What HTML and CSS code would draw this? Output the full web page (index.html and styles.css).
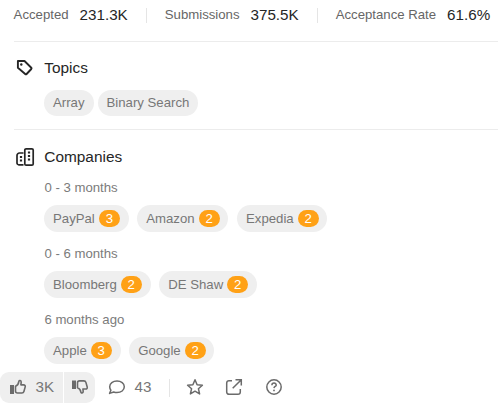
FILE: index.html
```html
<!DOCTYPE html>
<html lang="en">
<head>
<meta charset="utf-8">
<title>Problem details</title>
<link rel="stylesheet" href="styles.css">
</head>
<body>
<main class="panel">
  <dl class="stats">
    <div class="stat"><dt>Accepted</dt><dd>231.3K</dd></div>
    <div class="stat"><dt>Submissions</dt><dd>375.5K</dd></div>
    <div class="stat"><dt>Acceptance Rate</dt><dd>61.6%</dd></div>
  </dl>
  <section class="section topics">
    <h2><svg width="20" height="20" viewBox="0 0 20 20" fill="none" stroke="currentColor" stroke-width="1.9" stroke-linejoin="round"><path d="M2.900 3H9.500L16.300 9.700a1 1 0 0 1 0 1.300l-4.700 5a1 1 0 0 1-1.400 0L2.900 9.800z"/><circle cx="6.300" cy="6.500" r="1.200" fill="currentColor" stroke="none"/></svg>Topics</h2>
    <div class="tags"><span class="tag">Array</span><span class="tag">Binary Search</span></div>
  </section>
  <section class="section companies">
    <h2><svg width="20" height="20" viewBox="0 0 20 20" fill="none" stroke="currentColor" stroke-width="1.7"><rect x="9.800" y="1.800" width="8.400" height="16.400" rx="1.300"/><path d="M8.500 6H4.500a2.500 2.500 0 0 0-2.500 2.500V16a1.800 1.800 0 0 0 1.800 1.800h4.700"/><path d="M14 4.500v2M14 8v2M14 11.500v2M6 9v2M6 12.500v2" stroke-width="2.200"/></svg>Companies</h2>
    <h3>0 - 3 months</h3>
    <div class="chips"><span class="chip">PayPal<b>3</b></span><span class="chip">Amazon<b>2</b></span><span class="chip">Expedia<b>2</b></span></div>
    <h3>0 - 6 months</h3>
    <div class="chips"><span class="chip">Bloomberg<b>2</b></span><span class="chip">DE Shaw<b>2</b></span></div>
    <h3>6 months ago</h3>
    <div class="chips"><span class="chip">Apple<b>3</b></span><span class="chip">Google<b>2</b></span></div>
  </section>
</main>
<footer class="toolbar">
  <div class="votes">
    <button class="up" aria-label="Like"><svg width="18" height="18" viewBox="0 0 18 18" fill="none" stroke="currentColor" stroke-width="1.600" stroke-linejoin="round"><path d="M1 7h4v9H1z" fill="currentColor" stroke="none"/><path d="M6.500 8.200c2-.6 3-2.200 3.300-4.500.2-1.800 2.500-1.400 2.400.5l-.3 2.700h2.700c1.300 0 1.900.9 1.600 2l-1.300 4.600c-.3 1-.9 1.500-2 1.500H8.500c-1.200 0-2-.8-2-2z"/></svg><span>3K</span></button>
    <button class="down" aria-label="Dislike"><svg width="18" height="18" viewBox="0 0 18 18" fill="none" stroke="currentColor" stroke-width="1.600" stroke-linejoin="round"><path d="M1 2.500h4v8.500H1z" fill="currentColor" stroke="none"/><path d="M6.500 9.700c2 .6 3 2.200 3.300 4.100.2 1.800 2.500 1.400 2.400-.5l-.3-2.300h2.700c1.300 0 1.900-.9 1.600-2l-1.300-4.600c-.3-1-.9-1.500-2-1.500H8.500c-1.200 0-2 .8-2 2z"/></svg></button>
  </div>
  <button class="comments" aria-label="Comments"><svg width="18" height="18" viewBox="0 0 18 18" fill="none" stroke="currentColor" stroke-width="1.500" stroke-linejoin="round"><path d="M2.900 12.200A5.600 5.600 0 0 1 1.700 8.700C1.700 5.300 4.900 3 9 3s7.300 2.400 7.300 5.800-3.200 5.800-7.300 5.800c-1.200 0-2.300-.2-3.300-.6L1.600 15.400z"/></svg><span>43</span></button>
  <i class="rule"></i>
  <div class="actions">
    <svg width="18" height="18" viewBox="0 0 18 18" fill="none" stroke="currentColor" stroke-width="1.500" stroke-linejoin="round"><path d="M9 1.800l2.100 4.900 5.300.5-4 3.500 1.200 5.200L9 13.200l-4.600 2.700 1.200-5.200-4-3.500 5.300-.5z"/></svg>
    <svg width="18" height="18" viewBox="0 0 18 18" fill="none" stroke="currentColor" stroke-width="1.500"><path d="M7 2.800H4A2.300 2.300 0 0 0 1.700 5v9A2.300 2.300 0 0 0 4 16.300h9a2.300 2.300 0 0 0 2.300-2.300v-3M10.500 1.700h5.800v5.800M16.300 1.700L7.700 10.300"/></svg>
    <svg width="18" height="18" viewBox="0 0 18 18" fill="none" stroke="currentColor" stroke-width="1.500"><circle cx="9" cy="9" r="7.200"/><path d="M6.900 7.200c.1-2.900 4.400-2.700 4.300 0 0 1.300-2.100 1.300-2.200 2.900"/><circle cx="9" cy="12.400" r=".9" fill="currentColor" stroke="none"/></svg>
  </div>
</footer>
</body>
</html>
```
FILE: styles.css
```css
* { box-sizing: border-box; }
body {
  margin: 0;
  height: 404px;
  overflow: hidden;
  background: #fff;
  color: #262626;
  font-family: "Liberation Sans", Arial, sans-serif;
  font-size: 13.2px;
}
svg { display: block; flex: none; }
.panel { height: 372px; padding-left: 14px; }
.stats {
  display: flex;
  margin: 0 0 0 -0.4px;
  height: 41px;
  padding-top: 8px;
  white-space: nowrap;
}
.stat { display: flex; align-items: center; height: 15px; line-height: 17px; }
.stat + .stat { margin-left: 18px; padding-left: 18px; border-left: 1px solid #e5e5e5; }
dt, dd { margin-top: -2px; }
dt { color: #666; }
dd { margin-left: 11px; font-size: 15.2px; }
.section { border-top: 1px solid #ececec; }
.topics { height: 88px; padding-top: 16px; }
.companies { padding-top: 17px; }
h2 {
  display: flex;
  align-items: center;
  gap: 9.3px;
  margin: 0 0 0 1px;
  height: 20px;
  font-size: 15.4px;
  line-height: 18px;
  padding-bottom: 1px;
  font-weight: 400;
}
h3 {
  margin: 0 0 0 30.4px;
  font-size: 13.2px;
  line-height: 17px;
  font-weight: 400;
  color: #7b7b7b;
}
h2 + h3 { margin-top: 12px; }
.tags { display: flex; gap: 4px; margin: 12px 0 0 30px; }
.tag, .chip {
  display: flex;
  align-items: center;
  padding: 0 9px;
  border-radius: 14px;
  background: #efefef;
  color: #777;
}
.tag { height: 26px; padding-bottom: 1px; }
.chips { display: flex; gap: 8.6px; margin: 9px 0 13px 30px; }
.chip { height: 27px; }
.chip b {
  width: 21px;
  height: 17px;
  margin-left: 4px;
  margin-right: -0.2px;
  border-radius: 9px;
  background: #ffa116;
  color: #fff;
  font-weight: 400;
  line-height: 17px;
  text-align: center;
}
.toolbar { display: flex; align-items: center; height: 31px; color: #6b6b6b; }
.votes { display: flex; gap: 1px; height: 31px; }
button {
  display: flex;
  align-items: center;
  margin: 0;
  padding: 0 0 2px;
  border: 0;
  background: none;
  color: inherit;
  font: 15.2px "Liberation Sans", Arial, sans-serif;
}
button span { color: #777; }
.up, .down { background: #efefef; }
.up { width: 63px; padding-left: 9px; gap: 8.5px; border-radius: 9px 0 0 9px; }
.down { width: 31px; padding-left: 7px; border-radius: 0 9px 9px 0; }
.comments { margin-left: 13px; gap: 8.6px; }
.rule { width: 1px; height: 18px; margin-left: 17.4px; background: #e5e5e5; }
.actions { display: flex; gap: 21.5px; margin-left: 16px; padding-bottom: 2px; }
```
